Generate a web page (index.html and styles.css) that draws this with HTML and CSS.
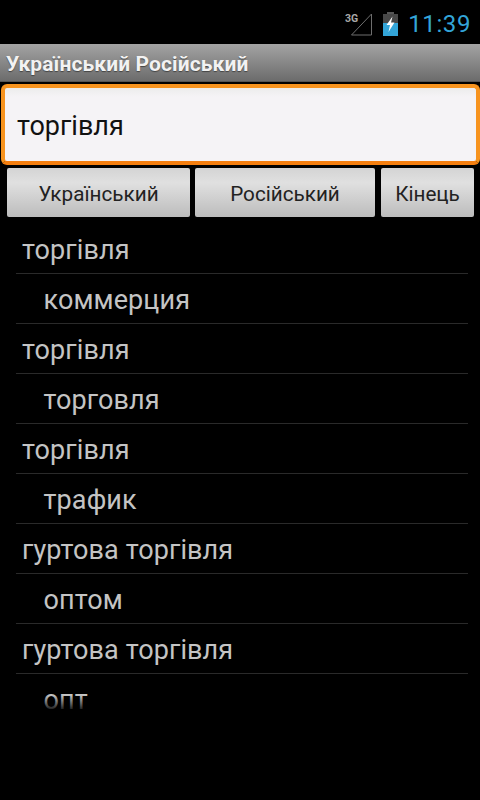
FILE: index.html
```html
<!DOCTYPE html>
<html lang="uk">
<head>
<meta charset="utf-8">
<title>Словник</title>
<link rel="stylesheet" href="styles.css">
</head>
<body>
<div class="status">
  <svg class="sig" width="27" height="24" viewBox="0 0 27 24"><text x="0" y="9.5" class="sig-t">3G</text><path d="M6.5 23 L26.5 2 V23 Z" fill="none" stroke="#6e6e6e" stroke-width="1"/></svg>
  <svg class="bat" width="17" height="24" viewBox="0 0 17 24"><rect x="5" y="0" width="7" height="2" fill="#555"/><rect x="1" y="2" width="15" height="9" fill="#484848"/><rect x="1" y="11" width="15" height="13" fill="#33a5d8"/><path d="M10.5 4.5 L4.5 13 H8 L6.5 20 L12.5 10.5 H9 Z" fill="#fff"/></svg>
  <span class="time">11:39</span>
</div>
<div class="title">Український Російський</div>
<div class="edit">торгівля</div>
<div class="buttons">
  <div class="btn b1">Український</div>
  <div class="btn b2">Російський</div>
  <div class="btn b3">Кінець</div>
</div>
<div class="list">
  <div class="row">торгівля</div>
  <div class="row sub">коммерция</div>
  <div class="row">торгівля</div>
  <div class="row sub">торговля</div>
  <div class="row">торгівля</div>
  <div class="row sub">трафик</div>
  <div class="row">гуртова торгівля</div>
  <div class="row sub">оптом</div>
  <div class="row">гуртова торгівля</div>
  <div class="row sub">опт</div>
  <div class="fade"></div>
</div>
</body>
</html>
```
FILE: styles.css
```css
* { box-sizing: border-box; }
html, body { margin: 0; height: 100%; }
body { width: 480px; height: 800px; background: #000; font-family: Roboto, "Liberation Sans", sans-serif; overflow: hidden; }
.status { height: 44px; display: flex; justify-content: flex-end; align-items: center; padding: 4px 9px 0 0; background: #000; }
.sig { margin: 0 10px 0 0; }
.sig-t { font: bold 10.5px Roboto, sans-serif; fill: #a8a8a8; }
.bat { margin-right: 9px; }
.time { color: #33a5d8; font-size: 24px; line-height: 36px; letter-spacing: 0.6px; }
.title { height: 38px; background: linear-gradient(#a3a3a3, #6c6c6c); color: #f2f2f2; font-size: 21px; font-weight: 700; line-height: 40px; letter-spacing: 0.1px; padding-left: 6px; border-bottom: 1px solid #555; white-space: nowrap; text-shadow: 0 1px 1px #444; }
.edit { margin: 2px 0 0 1px; width: 479px; height: 81px; background: linear-gradient(#ececec, #f5f3f6 12%); border: 4px solid #f7931e; border-bottom-color: #f57f10; border-radius: 6px; color: #111; font-size: 27px; line-height: 76px; padding-left: 12px; }
.buttons { display: flex; margin-top: 3px; padding: 0 6px 0 7px; height: 49px; }
.btn { background: linear-gradient(#d4d4d4, #e0e0e0 30%, #bcbcbc); border-radius: 2px; color: #222; font-size: 20.7px; padding-top: 2px; display: flex; align-items: center; justify-content: center; }
.b1 { width: 183px; }
.b2 { width: 180px; margin-left: 5px; }
.b3 { flex: 1; margin-left: 6px; }
.list { position: relative; margin: 7px 12px 0 16px; height: 490px; overflow: hidden; }
.row { height: 50px; line-height: 52px; font-size: 27px; letter-spacing: 0.1px; color: #c4c4c4; padding-left: 6px; border-bottom: 1px solid #2a2a2a; white-space: nowrap; }
.sub { padding-left: 27.5px; }
.row:last-of-type { border-bottom: 0; }
.fade { position: absolute; left: 0; right: 0; bottom: 0; height: 19px; background: linear-gradient(rgba(0,0,0,0), #000 90%); }
```
